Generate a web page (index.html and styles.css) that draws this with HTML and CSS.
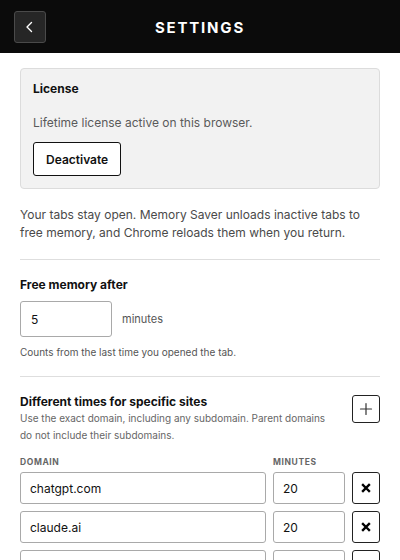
FILE: index.html
```html
<!DOCTYPE html>
<html lang="en">
<head>
<meta charset="utf-8">
<title>Settings</title>
<link rel="stylesheet" href="styles.css">
</head>
<body>
<header class="topbar">
  <button class="back-btn" aria-label="Back">
    <svg width="14" height="14" viewBox="0 0 14 14" fill="none" stroke="#fff" stroke-width="1.4" stroke-linecap="round" stroke-linejoin="round"><path d="M8.5 2.5 4 7l4.5 4.5"/></svg>
  </button>
  <h1 class="title">SETTINGS</h1>
</header>

<main class="content">
  <section class="card">
    <h2 class="card-title">License</h2>
    <p class="card-text">Lifetime license active on this browser.</p>
    <button class="btn">Deactivate</button>
  </section>

  <p class="intro">Your tabs stay open. Memory Saver unloads inactive tabs to free memory, and Chrome reloads them when you return.</p>

  <hr class="divider">

  <section class="block">
    <h2 class="label">Free memory after</h2>
    <div class="inline-field">
      <input class="input minutes-main" type="text" value="5">
      <span class="unit">minutes</span>
    </div>
    <p class="hint">Counts from the last time you opened the tab.</p>
  </section>

  <hr class="divider">

  <section class="block">
    <div class="sites-head">
      <div>
        <h2 class="label">Different times for specific sites</h2>
        <p class="desc">Use the exact domain, including any subdomain. Parent domains do not include their subdomains.</p>
      </div>
      <button class="icon-btn" aria-label="Add site">
        <svg width="14" height="14" viewBox="0 0 14 14" fill="none" stroke="#333" stroke-width="1.2" stroke-linecap="round"><path d="M7 1.5v11M1.5 7h11"/></svg>
      </button>
    </div>

    <div class="grid">
      <span class="col-head">DOMAIN</span>
      <span class="col-head">MINUTES</span>
      <span></span>

      <input class="input" type="text" value="chatgpt.com">
      <input class="input" type="text" value="20">
      <button class="icon-btn" aria-label="Remove">
        <svg width="12" height="12" viewBox="0 0 12 12" fill="none" stroke="#000" stroke-width="2.4" stroke-linecap="square"><path d="M3 3l6 6M9 3l-6 6"/></svg>
      </button>

      <input class="input" type="text" value="claude.ai">
      <input class="input" type="text" value="20">
      <button class="icon-btn" aria-label="Remove">
        <svg width="12" height="12" viewBox="0 0 12 12" fill="none" stroke="#000" stroke-width="2.4" stroke-linecap="square"><path d="M3 3l6 6M9 3l-6 6"/></svg>
      </button>

      <input class="input" type="text" value="">
      <input class="input" type="text" value="">
      <button class="icon-btn" aria-label="Remove">
        <svg width="12" height="12" viewBox="0 0 12 12" fill="none" stroke="#000" stroke-width="2.4" stroke-linecap="square"><path d="M3 3l6 6M9 3l-6 6"/></svg>
      </button>
    </div>
  </section>
</main>
</body>
</html>
```

FILE: styles.css
```css
* { box-sizing: border-box; }

html, body {
  margin: 0;
  padding: 0;
  background: #fff;
  font-family: Inter, "Noto Sans", "Liberation Sans", sans-serif;
  color: #111;
}

h1, h2, p { margin: 0; }

button {
  font-family: inherit;
  cursor: pointer;
}

.topbar {
  height: 53px;
  background: #0b0b0b;
  display: flex;
  align-items: center;
  padding: 0 14px;
  position: relative;
}

.back-btn {
  width: 32px;
  height: 32px;
  border-radius: 3px;
  border: 1px solid #4a4a4a;
  background: #262626;
  display: flex;
  align-items: center;
  justify-content: center;
  padding: 0;
}

.title {
  position: absolute;
  left: 0;
  right: 0;
  top: 19px;
  text-align: center;
  font-size: 15px;
  line-height: 18px;
  font-weight: 700;
  letter-spacing: 1.8px;
  color: #fff;
  pointer-events: none;
}

.content {
  padding: 15px 20px 0;
}

.card {
  background: #f2f2f2;
  border: 1px solid #dcdcdc;
  border-radius: 4px;
  padding: 12px;
  height: 121px;
}

.card-title {
  font-size: 12px;
  font-weight: 700;
  line-height: 16px;
}

.card-text {
  margin-top: 18px;
  font-size: 12px;
  line-height: 16px;
  color: #5a5a5a;
}

.btn {
  margin-top: 11px;
  height: 34px;
  padding: 0 12px;
  background: #fff;
  border: 1px solid #111;
  border-radius: 3px;
  font-size: 12px;
  font-weight: 600;
  color: #111;
}

.intro {
  margin-top: 17px;
  font-size: 12px;
  line-height: 18px;
  color: #4a4a4a;
}

.divider {
  border: 0;
  border-top: 1px solid #dedede;
  margin: 17px 0 0;
}

.block {
  padding-top: 17px;
}

.label {
  font-size: 12px;
  font-weight: 700;
  line-height: 16px;
  color: #111;
}

.inline-field {
  margin-top: 8px;
  display: flex;
  align-items: center;
  gap: 10px;
}

.input {
  height: 32px;
  width: 100%;
  border: 1px solid #a9a9a9;
  border-radius: 3px;
  background: #fff;
  padding: 0 9px;
  font-family: inherit;
  font-size: 12px;
  color: #111;
  outline: none;
}

.minutes-main {
  width: 92px;
  height: 36px;
  padding: 0 10px;
}

.unit {
  font-size: 11px;
  color: #555;
}

.hint {
  margin-top: 8px;
  font-size: 10px;
  line-height: 14px;
  color: #555;
}

.block + .divider { margin-top: 17px; }

.sites-head {
  display: flex;
  justify-content: space-between;
  align-items: flex-start;
  gap: 12px;
}

.desc {
  margin-top: 0;
  font-size: 10px;
  line-height: 17px;
  color: #666;
}

.icon-btn {
  width: 28px;
  height: 28px;
  flex: none;
  border: 1px solid #222;
  border-radius: 3px;
  background: #fff;
  display: flex;
  align-items: center;
  justify-content: center;
  padding: 0;
  margin-top: 1px;
}

.grid {
  margin-top: 13px;
  display: grid;
  grid-template-columns: 1fr 72px 28px;
  column-gap: 7px;
  row-gap: 7px;
  align-items: center;
}

.grid .icon-btn {
  height: 32px;
  margin-top: 0;
}

.col-head {
  font-size: 8.5px;
  font-weight: 700;
  letter-spacing: 0.6px;
  color: #666;
  line-height: 10px;
  margin-bottom: -2px;
}
```
